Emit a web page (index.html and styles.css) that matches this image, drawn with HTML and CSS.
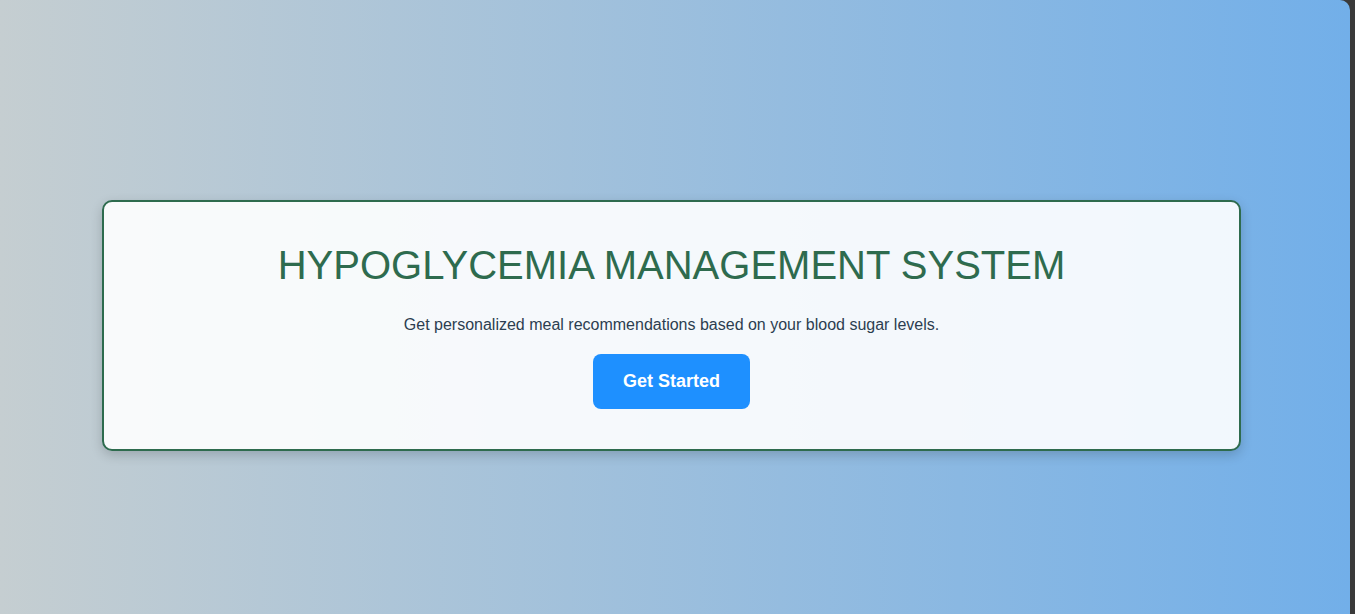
FILE: index.html
```html
<!DOCTYPE html>
<html lang="en">
<head>
<meta charset="utf-8">
<title>Hypoglycemia Management System</title>
<link rel="stylesheet" href="styles.css">
</head>
<body>
<div class="page">
  <main class="card">
    <h1 class="title">HYPOGLYCEMIA MANAGEMENT SYSTEM</h1>
    <p class="subtitle">Get personalized meal recommendations based on your blood sugar levels.</p>
    <button class="cta">Get Started</button>
  </main>
</div>
</body>
</html>
```
FILE: styles.css
```css
html, body {
  margin: 0;
  padding: 0;
  height: 100%;
}
body {
  background: #3a3a3a;
  font-family: "Liberation Sans", Arial, sans-serif;
  overflow: hidden;
}
.page {
  width: 1350px;
  height: 614px;
  border-top-right-radius: 10px;
  background: linear-gradient(to right, #c5ced1 0%, #72afe9 100%);
  box-sizing: border-box;
  padding: 200px 0 0 102px;
}
.card {
  width: 1139px;
  box-sizing: border-box;
  border: 2px solid #2e6b4e;
  border-radius: 10px;
  background: rgba(255, 255, 255, 0.9);
  box-shadow: 0 4px 12px rgba(0, 0, 0, 0.18);
  padding: 40px 40px 40px;
  text-align: center;
}
.title {
  margin: 0 0 28px;
  font-size: 40px;
  line-height: 46px;
  font-weight: normal;
  color: #2e6b4e;
}
.subtitle {
  margin: 0 0 20px;
  font-size: 16px;
  line-height: 18px;
  color: #2c3e50;
}
.cta {
  font-family: "Liberation Sans", Arial, sans-serif;
  font-size: 18px;
  line-height: 23px;
  font-weight: bold;
  color: #fff;
  background: #1e90ff;
  border: none;
  border-radius: 8px;
  padding: 16px 30px;
  cursor: pointer;
}
```
